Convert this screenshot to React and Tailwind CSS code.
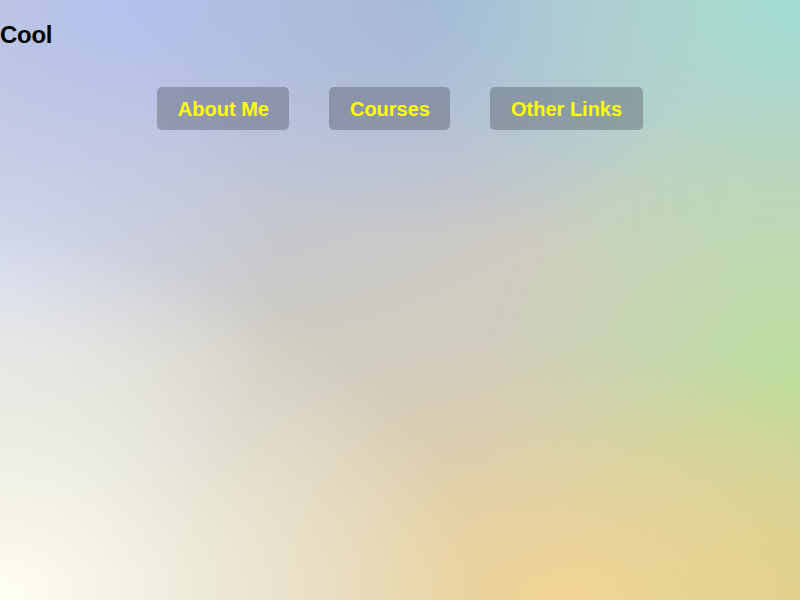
export default function App() {
  const btn =
    "h-[43px] px-[20.5px] flex items-center justify-center rounded-[5px] bg-[rgba(70,72,85,0.36)] text-[#ffff00] text-[20px] font-bold font-['Liberation_Sans',Arial,sans-serif]";
  return (
    <div className="w-[800px] h-[600px] overflow-hidden bg-[#cfcbbf] bg-[radial-gradient(ellipse_60%_60%_at_0%_100%,#fffff0_0%,rgba(255,255,240,0)_100%),radial-gradient(ellipse_55%_45%_at_70%_100%,#f1d494_0%,rgba(241,212,148,0)_100%),radial-gradient(ellipse_35%_40%_at_100%_100%,#d6cf86_0%,rgba(214,207,134,0)_100%),radial-gradient(ellipse_40%_50%_at_100%_65%,#b8df9e_0%,rgba(184,223,158,0)_100%),radial-gradient(ellipse_50%_55%_at_100%_0%,#a0dcd2_0%,rgba(160,220,210,0)_100%),radial-gradient(ellipse_40%_40%_at_55%_0%,#a4b8d8_0%,rgba(164,184,216,0)_100%),radial-gradient(ellipse_70%_60%_at_18%_0%,#b2c0ef_0%,rgba(178,192,239,0)_100%),radial-gradient(ellipse_35%_50%_at_0%_45%,#dfe2ec_0%,rgba(223,226,236,0)_100%)]">
      <h1 className="pt-[21px] text-[24px] leading-[28px] font-bold text-black font-['Liberation_Sans',Arial,sans-serif] tracking-[-0.3px]">
        Cool
      </h1>
      <nav className="mt-[38px] flex justify-center gap-[40px]">
        <a className={btn}>About Me</a>
        <a className={btn}>Courses</a>
        <a className={btn}>Other Links</a>
      </nav>
    </div>
  );
}
